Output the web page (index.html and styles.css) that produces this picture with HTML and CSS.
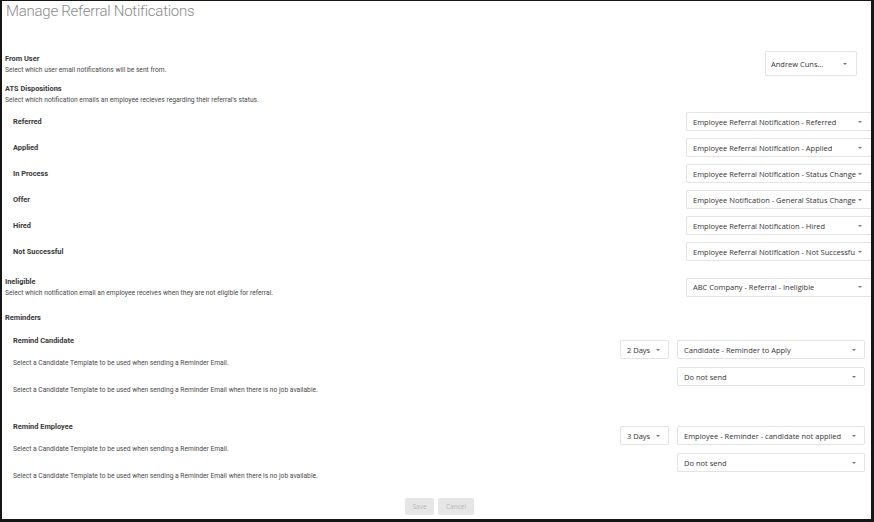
FILE: index.html
```html
<!DOCTYPE html>
<html lang="en">
<head>
<meta charset="utf-8">
<title>Manage Referral Notifications</title>
<link rel="stylesheet" href="styles.css">
</head>
<body>
<div class="frame">
  <h1 class="title">Manage Referral Notifications</h1>

  <div class="row row-from">
    <div class="info">
      <div class="label">From User</div>
      <div class="desc">Select which user email notifications will be sent from.</div>
    </div>
    <div class="select select-user"><span class="val">Andrew Cuns...</span><span class="caret"></span></div>
  </div>

  <div class="info section-ats">
    <div class="label">ATS Dispositions</div>
    <div class="desc">Select which notification emails an employee recieves regarding their referral's status.</div>
  </div>

  <div class="ats-list">
    <div class="row ats-row">
      <div class="label sub">Referred</div>
      <div class="select select-wide"><span class="val">Employee Referral Notification - Referred</span><span class="caret"></span></div>
    </div>
    <div class="row ats-row">
      <div class="label sub">Applied</div>
      <div class="select select-wide"><span class="val">Employee Referral Notification - Applied</span><span class="caret"></span></div>
    </div>
    <div class="row ats-row">
      <div class="label sub">In Process</div>
      <div class="select select-wide"><span class="val">Employee Referral Notification - Status Change</span><span class="caret"></span></div>
    </div>
    <div class="row ats-row">
      <div class="label sub">Offer</div>
      <div class="select select-wide"><span class="val">Employee Notification - General Status Change</span><span class="caret"></span></div>
    </div>
    <div class="row ats-row">
      <div class="label sub">Hired</div>
      <div class="select select-wide"><span class="val">Employee Referral Notification - Hired</span><span class="caret"></span></div>
    </div>
    <div class="row ats-row">
      <div class="label sub">Not Successful</div>
      <div class="select select-wide"><span class="val">Employee Referral Notification - Not Successfu</span><span class="caret"></span></div>
    </div>
  </div>

  <div class="row row-inel">
    <div class="info">
      <div class="label">Ineligible</div>
      <div class="desc">Select which notification email an employee receives when they are not eligible for referral.</div>
    </div>
    <div class="select select-wide"><span class="val">ABC Company - Referral - Ineligible</span><span class="caret"></span></div>
  </div>

  <div class="label reminders">Reminders</div>

  <div class="remind-group first">
    <div class="remind-left">
      <div class="label">Remind Candidate</div>
      <div class="desc d1">Select a Candidate Template to be used when sending a Reminder Email.</div>
      <div class="desc d2">Select a Candidate Template to be used when sending a Reminder Email when there is no job available.</div>
    </div>
    <div class="remind-right">
      <div class="ctrl-row">
        <div class="select select-days"><span class="val">2 Days</span><span class="caret"></span></div>
        <div class="select select-tpl"><span class="val">Candidate - Reminder to Apply</span><span class="caret"></span></div>
      </div>
      <div class="ctrl-row">
        <div class="select select-tpl"><span class="val">Do not send</span><span class="caret"></span></div>
      </div>
    </div>
  </div>

  <div class="remind-group second">
    <div class="remind-left">
      <div class="label">Remind Employee</div>
      <div class="desc d1">Select a Candidate Template to be used when sending a Reminder Email.</div>
      <div class="desc d2">Select a Candidate Template to be used when sending a Reminder Email when there is no job available.</div>
    </div>
    <div class="remind-right">
      <div class="ctrl-row">
        <div class="select select-days"><span class="val">3 Days</span><span class="caret"></span></div>
        <div class="select select-tpl"><span class="val">Employee - Reminder - candidate not applied</span><span class="caret"></span></div>
      </div>
      <div class="ctrl-row">
        <div class="select select-tpl"><span class="val">Do not send</span><span class="caret"></span></div>
      </div>
    </div>
  </div>

  <div class="actions">
    <button class="btn btn-save" type="button">Save</button>
    <button class="btn btn-cancel" type="button">Cancel</button>
  </div>
</div>
</body>
</html>
```

FILE: styles.css
```css
* { box-sizing: border-box; }

html, body {
  margin: 0;
  padding: 0;
  background: #ffffff;
}

.frame {
  width: 874px;
  height: 522px;
  border-style: solid;
  border-color: #161616;
  border-width: 1px 3px 3px 2px;
  padding: 0 0 0 3px;
  overflow: hidden;
  background: #ffffff;
  font-family: Roboto, "Liberation Sans", Arial, sans-serif;
  color: #333;
}

.title {
  margin: 0;
  font-family: Roboto, "Liberation Sans", sans-serif;
  font-weight: 300;
  font-size: 15px;
  letter-spacing: -0.25px;
  line-height: 20px;
  height: 20px;
  color: #8a8a8a;
  padding-left: 1px;
}

.row {
  display: flex;
  align-items: center;
  justify-content: space-between;
}

.info {
  display: flex;
  flex-direction: column;
}

.label {
  font-family: Roboto, "Liberation Sans", sans-serif;
  font-weight: 700;
  font-size: 7.4px;
  line-height: 10px;
  color: #383838;
}

.desc {
  font-family: Roboto, "Liberation Sans", sans-serif;
  font-size: 6.7px;
  line-height: 8px;
  color: #4a4a4a;
  margin-top: 2px;
  white-space: nowrap;
}

.row-from {
  margin-top: 30px;
  height: 25px;
}

.section-ats {
  margin-top: 8px;
}

.ats-list {
  margin-top: 8px;
  display: flex;
  flex-direction: column;
  gap: 7px;
}

.ats-row {
  height: 19px;
}

.label.sub {
  padding-left: 8px;
}

.row-inel {
  margin-top: 16px;
  height: 20px;
}

.reminders {
  margin-top: 16px;
}

/* selects */
.select {
  position: relative;
  display: flex;
  align-items: center;
  background: #fff;
  border: 1px solid #e4e4e4;
  border-radius: 2px;
  box-shadow: 0 0 1px rgba(0, 0, 0, 0.04);
  font-family: "Open Sans", "Noto Sans", sans-serif;
  font-size: 7.5px;
  color: #333;
  padding: 0 16px 0 6px;
  white-space: nowrap;
  overflow: hidden;
}

.select .val {
  overflow: hidden;
  white-space: nowrap;
}

.caret {
  position: absolute;
  right: 8px;
  top: 50%;
  margin-top: -1px;
  width: 0;
  height: 0;
  border-left: 2.5px solid transparent;
  border-right: 2.5px solid transparent;
  border-top: 2.5px solid #777;
}

.select-user {
  width: 92px;
  height: 25px;
  margin-right: 14px;
  padding-left: 5px;
}
.select-user .caret { right: 9px; }

.select-wide {
  width: 186px;
  height: 19px;
  margin-right: -1px;
  padding-right: 15px;
}
.select-wide .caret { right: 9px; }

.select-days {
  width: 49px;
  height: 19px;
}

.select-tpl {
  width: 188px;
  height: 19px;
}

/* reminder groups */
.remind-group {
  display: flex;
  justify-content: space-between;
  align-items: flex-start;
}

.remind-group.first { margin-top: 13px; }
.remind-group.second { margin-top: 28px; }

.remind-left {
  padding-left: 8px;
  display: flex;
  flex-direction: column;
}

.remind-left .d1 { margin-top: 13px; }
.remind-left .d2 { margin-top: 19px; }

.remind-right {
  margin-top: 4px;
  margin-right: 6px;
  display: flex;
  flex-direction: column;
  align-items: flex-end;
  gap: 8px;
}

.ctrl-row {
  display: flex;
  gap: 8px;
}

/* actions */
.actions {
  margin-top: 18px;
  display: flex;
  justify-content: center;
  gap: 4px;
  padding-left: 3px;
}

.btn {
  height: 17px;
  border: none;
  border-radius: 2px;
  background: #e6e6e6;
  color: #b9b9b9;
  font-family: "Open Sans", "Noto Sans", sans-serif;
  font-size: 6.5px;
  padding: 0;
}

.btn-save { width: 29px; }
.btn-cancel { width: 36px; }
```
